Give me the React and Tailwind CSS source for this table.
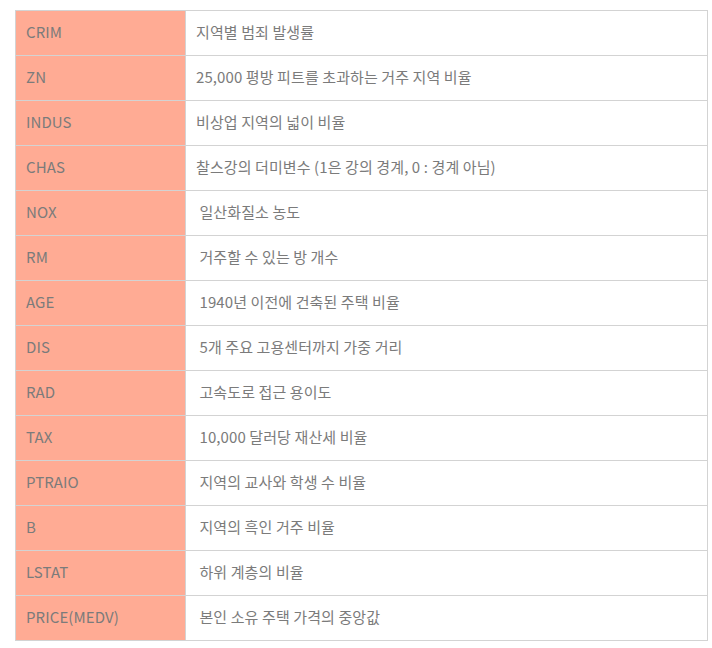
import React from "react";

const rows = [
  ["CRIM", "지역별 범죄 발생률"],
  ["ZN", "25,000 평방 피트를 초과하는 거주 지역 비율"],
  ["INDUS", "비상업 지역의 넓이 비율"],
  ["CHAS", "찰스강의 더미변수 (1은 강의 경계, 0 : 경계 아님)"],
  ["NOX", " 일산화질소 농도"],
  ["RM", " 거주할 수 있는 방 개수"],
  ["AGE", " 1940년 이전에 건축된 주택 비율"],
  ["DIS", " 5개 주요 고용센터까지 가중 거리"],
  ["RAD", " 고속도로 접근 용이도"],
  ["TAX", " 10,000 달러당 재산세 비율"],
  ["PTRAIO", " 지역의 교사와 학생 수 비율"],
  ["B", " 지역의 흑인 거주 비율"],
  ["LSTAT", " 하위 계층의 비율"],
  ["PRICE(MEDV)", " 본인 소유 주택 가격의 중앙값"],
];

export default function App() {
  return (
    <div
      className="bg-white w-[712px] h-[648px] pt-[10px] pl-[15px]"
      style={{ fontFamily: '"Noto Sans CJK KR", "Noto Sans", sans-serif' }}
    >
      <table className="border-collapse w-[693px] text-[15px] leading-[20px] tracking-[0.1px] text-[#7b7b7b]">
        <tbody>
          {rows.map(([k, v]) => (
            <tr key={k} className="h-[45px]">
              <td className="w-[170px] bg-[#ffab94] border border-[#d3d3d3] pl-[10px] pb-[2px] align-middle">
                {k}
              </td>
              <td className="border border-[#d3d3d3] pl-[10px] pb-[2px] align-middle whitespace-pre">
                {v}
              </td>
            </tr>
          ))}
        </tbody>
      </table>
    </div>
  );
}
